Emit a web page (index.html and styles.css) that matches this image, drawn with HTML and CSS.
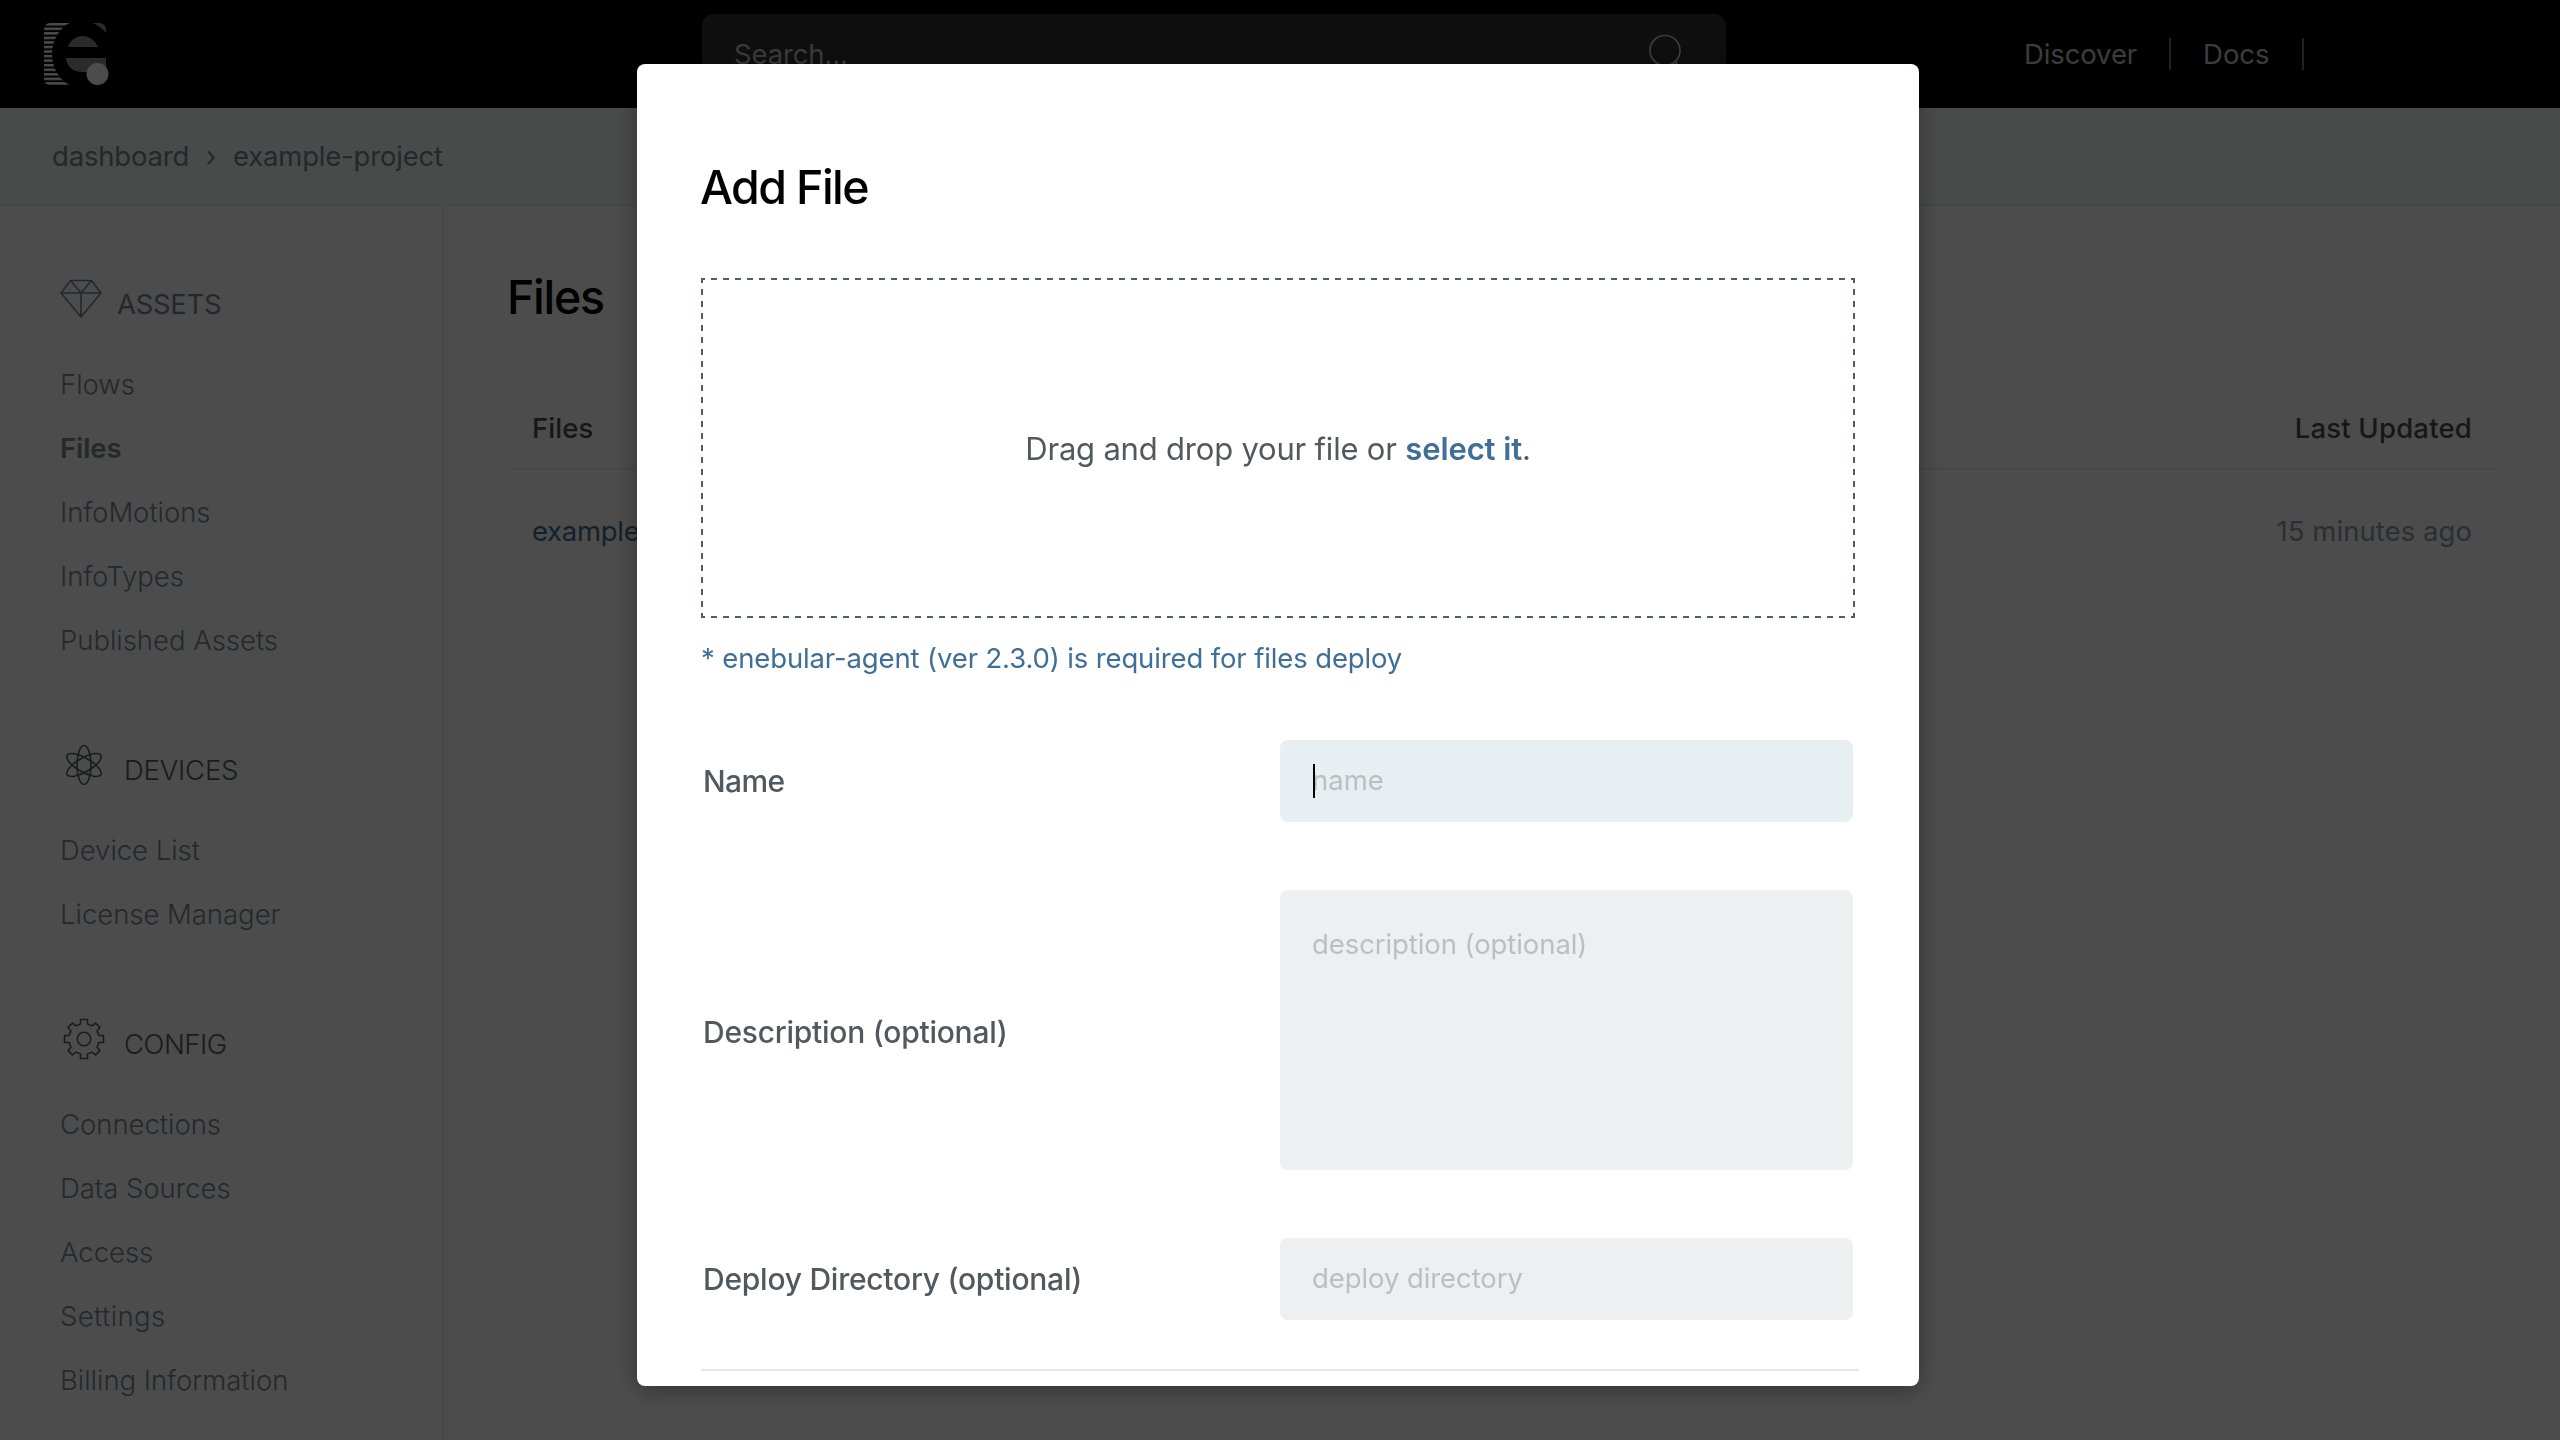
FILE: index.html
```
<!DOCTYPE html>
<html lang="en">
<head>
<meta charset="utf-8">
<title>Files - example-project</title>
<link rel="stylesheet" href="styles.css">
</head>
<body>
<header class="topbar">
  <svg class="logo" width="66" height="64" viewBox="0 0 66 64">
    <defs>
      <pattern id="stripes" width="8" height="4.55" patternUnits="userSpaceOnUse"><rect width="8" height="2.5" fill="#fafafa"/></pattern>
      <clipPath id="frame"><rect x="0" y="0" width="62" height="62" rx="6"/></clipPath>
    </defs>
    <g clip-path="url(#frame)">
      <rect width="29" height="62" fill="url(#stripes)"/>
      <ellipse cx="37.5" cy="31" rx="29.5" ry="34" fill="#000"/>
      <path d="M48 0H56A6 6 0 0 1 62 6V10C59 6 54 2 48 0Z" fill="#8f8f8f"/>
      <path d="M24 24C26 17 32 13 38.500 13S51 17 54 24Z" fill="#8f8f8f"/>
      <path d="M22 35H62V49H48C45 49 42 49 38 49C29 49 22 43 22 35Z" fill="#8f8f8f"/>
    </g>
    <circle cx="53.500" cy="51" r="11" fill="#fff"/>
  </svg>
  <div class="search">
    <span class="search-text">Search...</span>
    <svg class="search-icon" width="36" height="40" viewBox="0 0 36 40" fill="none" stroke="#d0d0d0" stroke-width="1.6"><circle cx="17" cy="16.500" r="15"/><path d="M27 27L35 38"/></svg>
  </div>
  <nav class="topnav">
    <a class="topnav-link">Discover</a>
    <a class="topnav-link docs">Docs</a>
  </nav>
</header>
<div class="crumbs"><span class="crumb">dashboard</span><span class="crumb-sep">›</span><span class="crumb">example-project</span></div>
<div class="body">
  <aside class="sidebar">
    <section class="group">
      <h2 class="group-title current">
        <svg class="diamond" width="42" height="40" viewBox="0 0 42 40" fill="none" stroke="currentColor" stroke-width="1.6" stroke-linejoin="round"><path d="M10.500 1.500H31.500L41 14L21 38L1 14ZM1 14H41M10.500 1.500L21 14L31.500 1.500M21 14V38"/></svg>
        ASSETS
      </h2>
      <a class="item">Flows</a>
      <a class="item active">Files</a>
      <a class="item">InfoMotions</a>
      <a class="item">InfoTypes</a>
      <a class="item">Published Assets</a>
    </section>
    <section class="group">
      <h2 class="group-title">
        <svg class="round-icon" width="44" height="44" viewBox="-22 -22 44 44" fill="none" stroke="currentColor" stroke-width="1.6"><ellipse rx="7" ry="19.500"/><ellipse rx="7" ry="19.500" transform="rotate(60)"/><ellipse rx="7" ry="19.500" transform="rotate(120)"/></svg>
        DEVICES
      </h2>
      <a class="item">Device List</a>
      <a class="item">License Manager</a>
    </section>
    <section class="group">
      <h2 class="group-title config">
        <svg class="round-icon" width="44" height="44" viewBox="-22 -22 44 44" fill="none" stroke="currentColor" stroke-width="1.6"><path d="M-3.500-15V-19.500H3.500V-15L8.100-13.100L11.700-15.900L15.900-11.700L13.100-8.100L15-3.500H19.500V3.500H15L13.100 8.100L15.900 11.700L11.700 15.900L8.100 13.100L3.500 15V19.500H-3.500V15L-8.100 13.100L-11.700 15.900L-15.900 11.700L-13.100 8.100L-15 3.500H-19.500V-3.500H-15L-13.100-8.100L-15.900-11.700L-11.700-15.900L-8.100-13.100Z"/><circle r="6.700"/></svg>
        CONFIG
      </h2>
      <a class="item">Connections</a>
      <a class="item">Data Sources</a>
      <a class="item">Access</a>
      <a class="item settings">Settings</a>
      <a class="item">Billing Information</a>
    </section>
  </aside>
  <main class="content">
    <h1 class="page-title">Files</h1>
    <div class="row head"><span>Files</span><span class="updated">Last Updated</span></div>
    <div class="row"><a class="file-link">example-file</a><span class="time">15 minutes ago</span></div>
  </main>
</div>

<div class="overlay">
  <div class="modal">
    <h1 class="modal-title">Add File</h1>
    <div class="dropzone"><p class="drop-text">Drag and drop your file or <a class="select">select it</a>.</p></div>
    <p class="note">* enebular-agent (ver 2.3.0) is required for files deploy</p>
    <form class="form">
      <div class="field"><label class="name-label">Name</label><div class="control"><input class="input focused" placeholder="name"><span class="caret"></span></div></div>
      <div class="field"><label class="area-label">Description (optional)</label><textarea class="input area" placeholder="description (optional)"></textarea></div>
      <div class="field"><label>Deploy Directory (optional)</label><input class="input" placeholder="deploy directory"></div>
    </form>
    <div class="rule"></div>
  </div>
</div>
</body>
</html>
```
FILE: styles.css
```
* { box-sizing: border-box; }
html, body { height: 100%; }
body {
  margin: 0;
  overflow: hidden;
  display: flex;
  flex-direction: column;
  background: #fff;
  font-family: Inter, "Liberation Sans", sans-serif;
  font-size: 27.5px;
  color: #788993;
}
h1, h2, p { margin: 0; font-weight: 400; }

.topbar {
  height: 108px;
  flex: none;
  background: #000;
  display: flex;
  align-items: flex-start;
  padding: 14px 0 0 44px;
}
.logo { margin-top: 9px; margin-right: 592px; }
.search {
  width: 1024px;
  height: 80px;
  border-radius: 12px;
  background: #323232;
  display: flex;
  justify-content: space-between;
  padding: 0 42px 0 32px;
}
.search-text { line-height: 80px; color: #c4c4c4; letter-spacing: -0.15px; }
.search-icon { margin-top: 20px; }
.topnav { display: flex; align-items: center; height: 80px; margin-left: 298px; }
.topnav-link {
  line-height: 32px;
  color: #c8c8c8;
  letter-spacing: -0.12px;
  padding-right: 32px;
  border-right: 2px solid #707070;
}
.topnav-link.docs { margin-left: 32px; letter-spacing: 0; }

.crumbs {
  flex: none;
  height: 98px;
  padding-left: 52px;
  background: #f5fbf8;
  border-bottom: 2px solid #edf2f1;
  display: flex;
  line-height: 96px;
  color: #7b858d;
}
.crumb { letter-spacing: -0.2px; }
.crumb-sep { width: 44px; text-align: center; }

.body { flex: 1; min-height: 0; display: flex; }
.sidebar {
  width: 444px;
  flex: none;
  border-right: 2px solid #f1f1f1;
  padding: 66px 0 0 59px;
  font-weight: 300;
}
.group { margin-bottom: 66px; }
.group-title {
  display: flex;
  height: 64px;
  line-height: 64px;
  margin-bottom: 16px;
  font-size: 27.5px;
  font-weight: 300;
  letter-spacing: -0.2px;
  color: #595e5e;
}
.group-title.current { color: #778792; font-weight: 400; letter-spacing: -0.3px; }
.group-title.config { letter-spacing: -0.5px; }
.diamond { margin: 7px 15px 0 1px; }
.round-icon { margin: 5px 18px 0 3px; }
.item { display: block; line-height: 64px; padding-left: 1px; letter-spacing: -0.03px; }
.item.settings { letter-spacing: 0.4px; }
.item.active { font-weight: 600; letter-spacing: -0.1px; }

.content { flex: 1; padding: 59px 64px 0 66px; }
.page-title {
  font-size: 46.5px;
  font-weight: 450;
  line-height: 64px;
  letter-spacing: -1.3px;
  color: #000;
  margin: 0 0 67px -3px;
}
.row {
  display: flex;
  justify-content: space-between;
  padding: 29px 24px 0 22px;
  line-height: 64px;
}
.row.head {
  height: 74px;
  padding-top: 0;
  border-bottom: 2px solid #eee;
  font-weight: 500;
  letter-spacing: 0.1px;
  color: #4a5053;
}
.updated { letter-spacing: 0.2px; }
.file-link { color: #3f6e96; letter-spacing: -0.3px; }
.time { color: #8c9daa; letter-spacing: 0.06px; }

.overlay {
  position: fixed;
  inset: 0;
  background: rgba(0, 0, 0, 0.7);
  padding: 64px 0 0 637px;
}
.modal {
  width: 1282px;
  height: 1322px;
  border-radius: 8px;
  background: #fff;
  box-shadow: 0 4px 24px rgba(0, 0, 0, 0.35);
  padding: 93px 64px 0;
  overflow: hidden;
}
.modal-title {
  font-size: 46.5px;
  font-weight: 450;
  line-height: 60px;
  letter-spacing: -1.6px;
  color: #000;
  margin-left: -1px;
}
/* 6px dash, 6px gap on every side */
.dropzone {
  --h: linear-gradient(90deg, #555c60 50%, transparent 50%);
  --v: linear-gradient(#555c60 50%, transparent 50%);
  height: 340px;
  margin-top: 61px;
  padding-top: 2px;
  background: var(--h) -2px 0 / 12px 2px repeat-x, var(--h) -2px 100% / 12px 2px repeat-x,
    var(--v) 0 -1px / 2px 12px repeat-y, var(--v) 100% -1px / 2px 12px repeat-y;
  display: flex;
  align-items: center;
  justify-content: center;
}
.drop-text { font-size: 31px; line-height: 40px; color: #51595e; letter-spacing: -0.2px; }
.select { color: #3f6e96; font-weight: 600; letter-spacing: -0.1px; }
.note { margin-top: 20px; line-height: 40px; color: #3f6e96; letter-spacing: -0.13px; }

.form { display: flex; flex-direction: column; gap: 68px; margin-top: 62px; }
.field { display: flex; align-items: center; justify-content: space-between; padding: 0 2px; }
.field label { font-size: 30px; font-weight: 500; letter-spacing: -0.25px; color: #51595e; }
.field .name-label { letter-spacing: -0.6px; }
.field .area-label { padding-top: 3px; }
.control { position: relative; display: flex; }
.input {
  display: block;
  width: 573px;
  height: 82px;
  margin: 0;
  border: 0;
  outline: 0;
  border-radius: 8px;
  background: #edeff1;
  padding: 0 32px 2px;
  font: inherit;
  letter-spacing: -0.08px;
  resize: none;
}
.input::placeholder { color: #bcbec0; opacity: 1; }
.input.focused { background: #e7eff3; letter-spacing: 0; }
.input.area { height: 280px; padding-top: 37px; line-height: 34px; }
.caret { position: absolute; left: 33px; top: 24px; width: 2px; height: 34px; background: #000; }
.rule { width: 1158px; height: 2px; margin-top: 49px; background: #e5e6e7; }
```
